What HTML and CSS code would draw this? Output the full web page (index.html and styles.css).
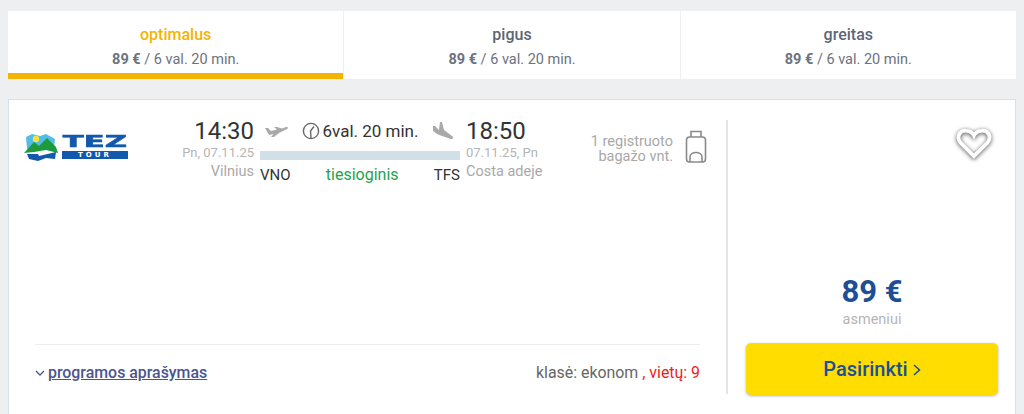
FILE: index.html
```html
<!DOCTYPE html>
<html lang="lt">
<head>
  <meta charset="UTF-8">
  <meta name="viewport" content="width=device-width, initial-scale=1.0">
  <title>Skrydžiai</title>
  <link rel="stylesheet" href="styles.css">
</head>
<body>
  <div class="tabs">
    <div class="tab active">
      <div class="tab-title">optimalus</div>
      <div class="tab-info"><b>89 €</b> / 6 val. 20 min.</div>
    </div>
    <div class="tab">
      <div class="tab-title">pigus</div>
      <div class="tab-info"><b>89 €</b> / 6 val. 20 min.</div>
    </div>
    <div class="tab">
      <div class="tab-title">greitas</div>
      <div class="tab-info"><b>89 €</b> / 6 val. 20 min.</div>
    </div>
  </div>

  <div class="card">
    <div class="card-main">
      <div class="flight">
        <div class="logo">
          <svg class="logo-mark" width="34" height="28" viewBox="0 0 34 28">
            <path d="M2 4 L8 1 L16 3 L22 1 L31 6 L30 15 L3 16 Z" fill="#52bde8"/>
            <circle cx="12" cy="6" r="3.2" fill="#f6e23c"/>
            <path d="M0 20 L10 9 L15 13 L23 5 L32 14 L34 20 L22 17 L10 19 Z" fill="#1c9a3c"/>
            <path d="M3 21 L14 21 L15 23 L32 19 L31 26 L22 25 L14 28 L5 26 Z" fill="#1259ae"/>
          </svg>
          <div class="logo-words">
            <div class="logo-tez">TEZ</div>
            <div class="logo-tour">TOUR</div>
          </div>
        </div>

        <div class="point point-from">
          <div class="time">14:30</div>
          <div class="date">Pn, 07.11.25</div>
          <div class="city">Vilnius</div>
        </div>

        <div class="route">
          <div class="route-top">
            <svg class="plane" width="24" height="14" viewBox="0 0 24 14">
              <path d="M1 4 L4 4 L7 7 L13 5.5 L10 3 L13 3 L18 4.5 L22 3 C24 2.5 24.5 4 23 5 L15 9 L10 13 L7 13 L9.5 10 L5 11 Z" fill="#a9a9a9"/>
            </svg>
            <span class="duration">
              <svg width="18" height="18" viewBox="0 0 18 18" fill="none" stroke="#666" stroke-width="1.4">
                <circle cx="9" cy="9" r="7.6"/>
                <path d="M9 16 L8.5 9 L12 4.5"/>
              </svg>
              6val. 20 min.
            </span>
            <svg class="plane plane-down" width="22" height="20" viewBox="0 0 22 20">
              <path d="M1 5 L3 5 L7 9 L8 1 L10 1 L12 9 L20 15 C22 17 21 18 19 18 L10 15 L5 13 L1 10 Z" fill="#a9a9a9"/>
            </svg>
          </div>
          <div class="route-bar"></div>
          <div class="route-bottom">
            <span>VNO</span>
            <span class="direct">tiesioginis</span>
            <span>TFS</span>
          </div>
        </div>

        <div class="point">
          <div class="time">18:50</div>
          <div class="date">07.11.25, Pn</div>
          <div class="city">Costa adeje</div>
        </div>

        <div class="baggage">
          <div class="baggage-text">1 registruoto<br>bagažo vnt.</div>
          <svg width="22" height="34" viewBox="0 0 22 34" fill="none" stroke="#8a8a8a" stroke-width="1.6">
            <rect x="1.5" y="7" width="19" height="25" rx="3"/>
            <path d="M6 7 V1.5 H16 V7"/>
            <path d="M5 32 V27 C5 21 17 21 17 27 V32"/>
          </svg>
        </div>
      </div>

      <div class="card-footer">
        <a class="program" href="#">
          <svg width="10" height="6" viewBox="0 0 10 6" fill="none" stroke="#4a5590" stroke-width="1.3">
            <path d="M1 1 L5 5 L9 1"/>
          </svg>
          <span>programos aprašymas</span>
        </a>
        <div class="seats">klasė: ekonom <span class="seats-left">, vietų: 9</span></div>
      </div>
    </div>

    <div class="card-side">
      <svg class="heart" width="38" height="32" viewBox="0 0 40 34" fill="none">
        <path class="heart-line" d="M20 31 L6 17 C0 10 6 3 12 4 C16 4 19 7 20 9 C21 7 24 4 28 4 C34 3 40 10 34 17 Z"/>
      </svg>
      <div class="price">89 €</div>
      <div class="per-person">asmeniui</div>
      <button class="select-btn">Pasirinkti
        <svg width="8" height="12" viewBox="0 0 8 12" fill="none" stroke="#1c4f96" stroke-width="1.5">
          <path d="M1 1 L6.5 6 L1 11"/>
        </svg>
      </button>
    </div>
  </div>
</body>
</html>
```

FILE: styles.css
```css
body {
  margin: 0;
  height: 414px;
  overflow: hidden;
  padding: 11px 8px 0;
  box-sizing: border-box;
  font-family: Roboto, 'Liberation Sans', sans-serif;
  background-color: #eeeff1;
}
.tabs {
  display: flex;
  gap: 1px;
  height: 68px;
}
.tab {
  flex: 1;
  background: white;
  text-align: center;
  padding-top: 14px;
  box-sizing: border-box;
}
.tab.active {
  border-bottom: 6px solid #f5b400;
}
.tab-title {
  font-size: 16px;
  font-weight: 500;
  line-height: 19px;
  color: #5d6675;
}
.active .tab-title {
  color: #f5b400;
}
.tab-info {
  margin-top: 7px;
  font-size: 14.5px;
  line-height: 18px;
  color: #6b7280;
}
.tab-info b {
  font-weight: 700;
}
.card {
  display: flex;
  margin-top: 20px;
  height: 330px;
  background: white;
  border: 1px solid #d3e2ea;
  box-sizing: border-box;
}
.card-main {
  flex: none;
  width: 719px;
  height: 274px;
  margin-top: 20px;
  border-right: 2px solid #e4e4e4;
  box-sizing: border-box;
  display: flex;
  flex-direction: column;
  justify-content: space-between;
}
.flight {
  display: flex;
  align-items: flex-start;
  margin-top: -3px;
}
.logo {
  flex: none;
  width: 104px;
  margin-left: 15px;
  margin-top: 16px;
  display: flex;
  gap: 4px;
  align-items: center;
}
.logo-words {
  width: 66px;
  color: #1259ae;
  text-align: center;
}
.logo-tez {
  font-family: 'DejaVu Sans', sans-serif;
  font-size: 15px;
  font-weight: 700;
  line-height: 12px;
  transform: scaleX(2.05);
  -webkit-text-stroke: 0.5px #1259ae;
}
.logo-tour {
  margin-top: 3px;
  background: #1259ae;
  color: white;
  font-family: 'DejaVu Sans', sans-serif;
  font-size: 7px;
  font-weight: 700;
  line-height: 8px;
  letter-spacing: 3px;
}
.point {
  flex: none;
  width: 90px;
}
.point-from {
  width: 126px;
  text-align: right;
}
.time {
  font-size: 24px;
  line-height: 28px;
  color: #333;
}
.date {
  font-size: 13px;
  line-height: 16px;
  color: #b5b5b5;
}
.city {
  font-size: 14.5px;
  line-height: 18px;
  color: #a8a8a8;
  margin-top: 2px;
}
.route {
  flex: none;
  width: 200px;
  margin: 0 6px;
}
.route-top {
  display: flex;
  justify-content: space-between;
  align-items: center;
  height: 28px;
  padding: 0 6px 0 4px;
  color: #333;
}
.duration {
  display: flex;
  align-items: center;
  gap: 3px;
  font-size: 17px;
}
.plane {
  margin-top: -1px;
}
.route-bar {
  height: 9px;
  margin-top: 6px;
  background: #d1dfe6;
}
.route-bottom {
  display: flex;
  justify-content: space-between;
  margin-top: 6px;
  font-size: 15px;
  line-height: 18px;
  color: #333;
}
.direct {
  font-size: 16px;
  color: #1fa24a;
}
.baggage {
  flex: 1;
  display: flex;
  gap: 12px;
  margin-top: 13px;
  justify-content: flex-end;
  padding-right: 19px;
}
.baggage-text {
  margin-top: 4px;
  font-size: 14.5px;
  line-height: 15px;
  text-align: right;
  color: #a8a8a8;
}
.card-footer {
  display: flex;
  justify-content: space-between;
  margin: 0 26px;
  border-top: 1px solid #eee;
  padding: 18px 0 11px;
  font-size: 15.9px;
  line-height: 20px;
}
.program {
  display: flex;
  align-items: center;
  gap: 3px;
  color: #4a5590;
  font-weight: 500;
}
.seats {
  color: #666;
}
.seats-left {
  color: #f01c1c;
}
.card-side {
  flex: 1;
  display: flex;
  flex-direction: column;
  align-items: center;
  padding: 0 17px 0 18px;
}
.heart {
  align-self: flex-end;
  margin-top: 27px;
  margin-right: 5px;
  filter: drop-shadow(0 1px 2px rgba(0,0,0,0.7));
}
.heart-line {
  stroke: white;
  stroke-width: 4;
}
.price {
  margin-top: 114px;
  font-size: 31px;
  line-height: 38px;
  font-weight: 700;
  color: #1c4f96;
}
.per-person {
  font-size: 14.5px;
  line-height: 18px;
  color: #b5b5b5;
}
.select-btn {
  width: 100%;
  height: 52px;
  margin-top: 14px;
  border: none;
  border-radius: 5px;
  background: #ffdd00;
  box-shadow: 0 1px 3px rgba(0,0,0,0.3);
  font-family: inherit;
  font-size: 20px;
  font-weight: 500;
  color: #1c4f96;
}
```
